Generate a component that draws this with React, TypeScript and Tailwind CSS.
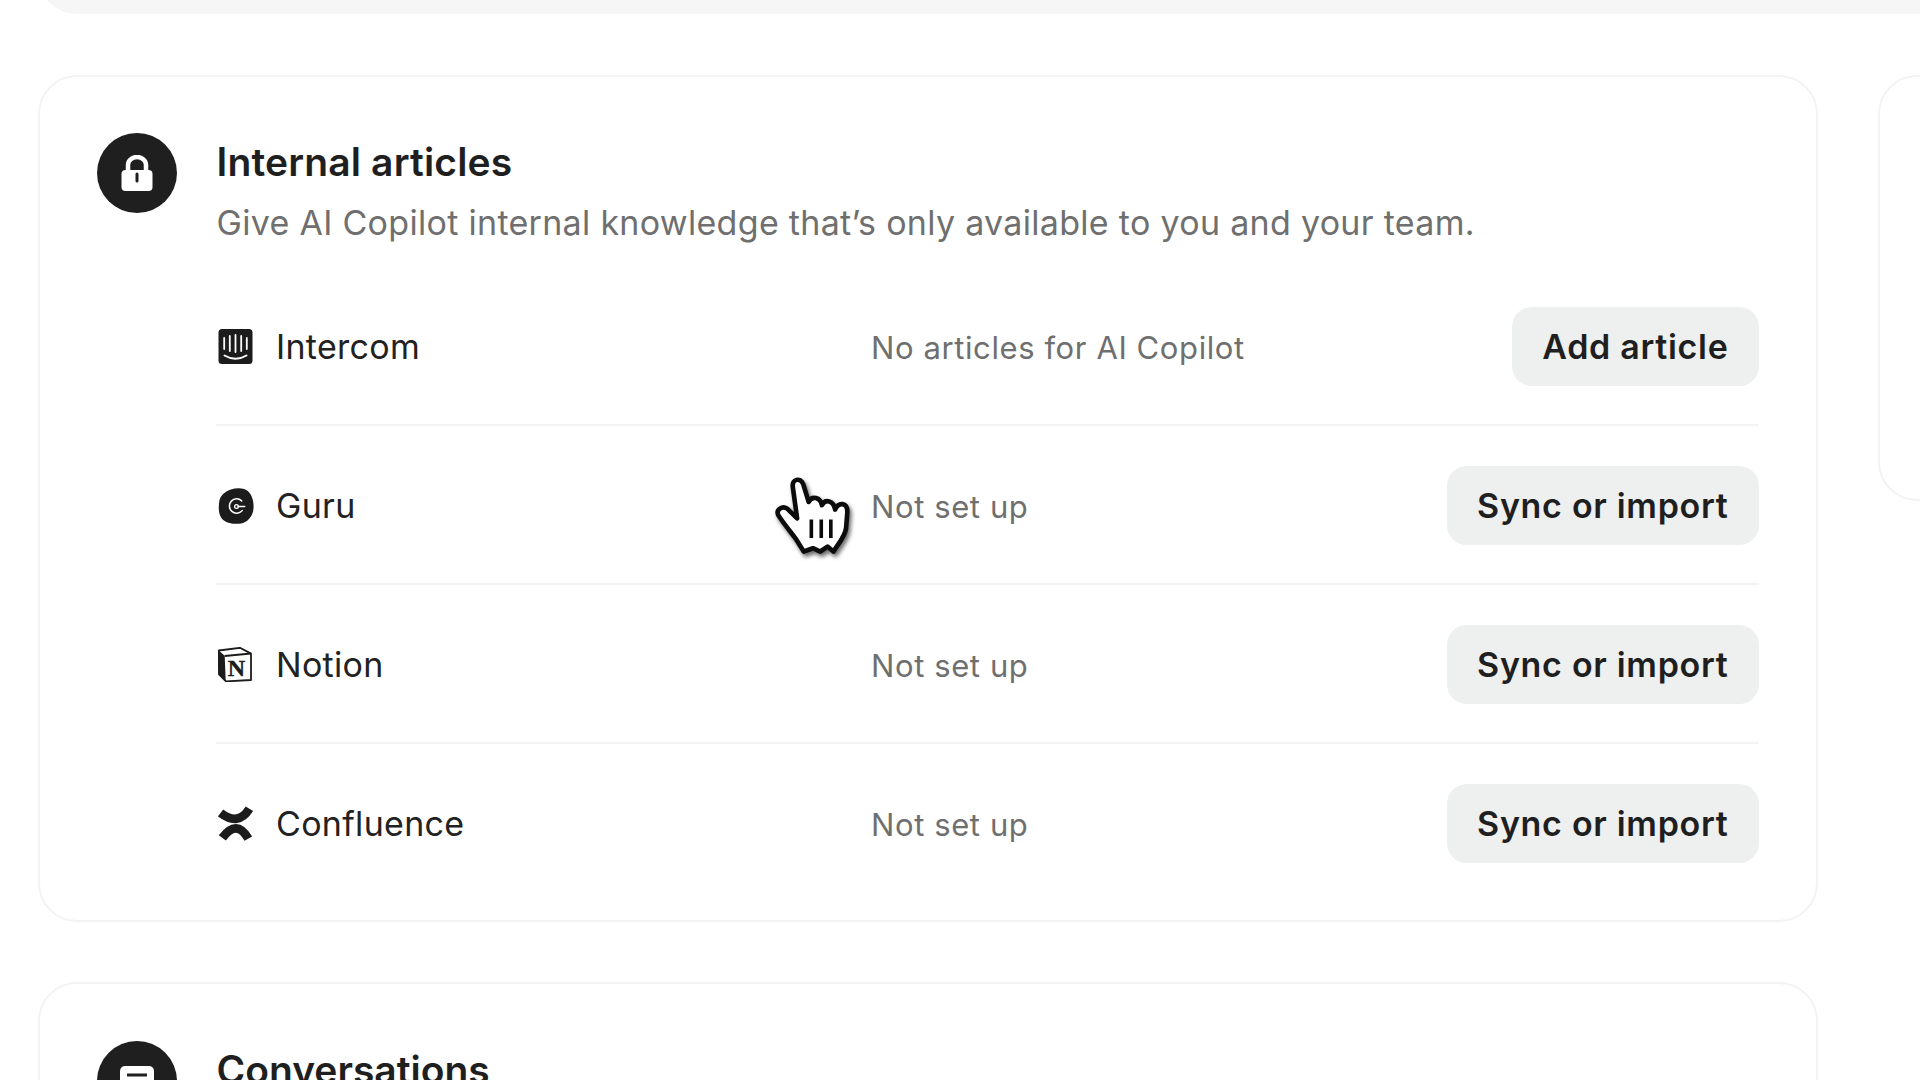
const FONT = "font-['Inter',sans-serif]";

function IntercomIcon() {
  return (
    <svg width="35" height="35" viewBox="0 0 34 35" className="shrink-0">
      <rect width="34" height="35" rx="3.5" fill="#1c1c1c" />
      <g stroke="#fff" strokeWidth="1.8" strokeLinecap="round">
        <path d="M5.7 9v11M11.3 7v15M17 6v17M22.7 7v15M28.3 9v11" />
        <path d="M6 26.5Q17 33 28 26.5" fill="none" strokeWidth="2" />
      </g>
    </svg>
  );
}

function GuruIcon() {
  return (
    <svg width="36" height="36" viewBox="0 0 34 35" className="mr-[-1px] shrink-0">
      <path d="M0.5 15C1 8 5 4 12 1.5 18-.5 25-.5 29 3.5 33 7.5 34.5 14 34 20 33.5 27 29 33 22 34.5 14 35.5 7 34.5 3 29.5 0 25 0 20 .5 15z" fill="#1c1c1c" />
      <path d="M22.5 12.5A7 7 0 1 0 23 22" fill="none" stroke="#fff" strokeWidth="1.5" strokeLinecap="round" />
      <circle cx="17.5" cy="18" r="1.8" fill="none" stroke="#fff" strokeWidth="1.3" />
      <path d="M19 18h6.5" stroke="#fff" strokeWidth="1.5" strokeLinecap="round" />
    </svg>
  );
}

function NotionIcon() {
  return (
    <svg width="34" height="35" viewBox="0 0 34 35" className="mr-[1px] shrink-0">
      <path d="M0.8 3.5 22 0.8l11 5.8V33l-25 1.4-7-7z" fill="#fff" stroke="#1c1c1c" strokeWidth="1.8" strokeLinejoin="round" />
      <path d="M0.5 3.3 6.7 8.7l1 25.6L1 27.7z" fill="#1c1c1c" />
      <path d="M6.7 9 33 6.6" stroke="#1c1c1c" strokeWidth="2" />
      <text x="18.5" y="28.5" textAnchor="middle" fontFamily="'Liberation Serif',serif" fontWeight="700" fontSize="24" stroke="#1c1c1c" strokeWidth="0.4" fill="#1c1c1c">N</text>
    </svg>
  );
}

function ConfluenceIcon() {
  return (
    <svg width="36" height="36" viewBox="0 0 34 35" className="mr-[-1px] shrink-0">
      <path d="M2 6.7Q19.4 19.9 30 2.7" fill="none" stroke="#1c1c1c" strokeWidth="8.5" />
      <path d="M3.7 31Q17.6 12 29 31.7" fill="none" stroke="#1c1c1c" strokeWidth="8.5" />
    </svg>
  );
}

function LockBadge() {
  return (
    <div className="flex h-[80px] w-[80px] shrink-0 items-center justify-center rounded-full bg-[#1f1f1f]">
      <svg width="32" height="36" viewBox="0 0 32 36">
        <path d="M7 17V10a9 8 0 0 1 18 0v7" fill="none" stroke="#fff" strokeWidth="4.5" />
        <rect x="0.5" y="15" width="31" height="21" rx="4" fill="#fff" />
        <path d="M16 19v7" stroke="#1f1f1f" strokeWidth="3" strokeLinecap="round" />
      </svg>
    </div>
  );
}

function ChatBadge() {
  return (
    <div className="flex h-[80px] w-[80px] shrink-0 items-center justify-center rounded-full bg-[#1f1f1f]">
      <svg width="34" height="30" viewBox="0 0 34 30">
        <rect width="34" height="30" rx="5" fill="#fff" />
        <path d="M7 9h20" stroke="#1f1f1f" strokeWidth="3" />
      </svg>
    </div>
  );
}

function HandCursor() {
  return (
    <svg
      width="76"
      height="82"
      viewBox="100 78 230 245"
      className="absolute left-[774px] top-[476px] drop-shadow-[2px_3px_2px_rgba(0,0,0,0.6)]"
    >
      <path
        d="M190 305 165 265C150 245 125 215 113 195 105 178 125 165 140 175L170 205 157 110C153 85 180 80 188 100L205 155C215 135 240 140 245 165 255 145 280 150 285 178 295 155 322 155 322 185L318 235C315 260 295 280 280 305L262 290 240 305 218 295Z"
        fill="#fff"
        stroke="#0c0c0c"
        strokeWidth="14"
        strokeLinejoin="round"
      />
      <path d="M213 208v56M243 208v56M272 208v56" stroke="#0c0c0c" strokeWidth="11" />
    </svg>
  );
}

type Source = { name: string; status: string; action: string; icon: React.ReactNode };

const SOURCES: Source[] = [
  { name: "Intercom", status: "No articles for AI Copilot", action: "Add article", icon: <IntercomIcon /> },
  { name: "Guru", status: "Not set up", action: "Sync or import", icon: <GuruIcon /> },
  { name: "Notion", status: "Not set up", action: "Sync or import", icon: <NotionIcon /> },
  { name: "Confluence", status: "Not set up", action: "Sync or import", icon: <ConfluenceIcon /> },
];

function SourceRow({ source }: { source: Source }) {
  return (
    <div className="flex items-center border-b-2 border-[#f3f3f3] pb-[38px] pt-[40px] last:border-b-0 last:pb-0">
      <div className="flex w-[655px] shrink-0 items-center gap-[23px] pl-[2px]">
        {source.icon}
        <span className="text-[34px] leading-[49px] tracking-[0.3px] text-[#222222]">{source.name}</span>
      </div>
      <span className="pt-[2px] text-[31px] leading-[49px] tracking-[0.6px] text-[#6f6f6f]">{source.status}</span>
      <button
        type="button"
        className="ml-auto h-[79px] rounded-[20px] bg-[#eeefef] px-[30.5px] text-[34px] font-semibold tracking-[0.7px] text-[#1f1f1f]"
      >
        {source.action}
      </button>
    </div>
  );
}

export default function App() {
  return (
    <div className={`relative h-screen w-full overflow-hidden bg-white ${FONT}`}>
      <div className="ml-[38px] h-[14px] overflow-hidden">
        <div className="mt-[-66px] h-[80px] rounded-bl-[39px] bg-[#f6f6f6]" />
      </div>

      <div className="mt-[61px] flex items-start gap-[60px] pl-[38px]">
        <div className="flex w-[1780px] shrink-0 flex-col gap-[60px]">
          <section className="h-[847px] rounded-[39px] border-2 border-[#f3f3f3] px-[57px] pt-[56px]">
            <div className="flex gap-[39.5px]">
              <LockBadge />
              <div>
                <h2 className="text-[39px] font-semibold leading-[57px] tracking-[0.15px] text-[#1f1f1f]">Internal articles</h2>
                <p className="mt-[3px] text-[34px] leading-[59px] tracking-[0.3px] text-[#6f6f6f]">
                  Give AI Copilot internal knowledge that’s only available to you and your team.
                </p>
              </div>
            </div>
            <div className="ml-[119px] mt-[15px]">
              {SOURCES.map((s) => (
                <SourceRow key={s.name} source={s} />
              ))}
            </div>
          </section>

          <section className="h-[400px] rounded-[39px] border-2 border-[#f3f3f3] px-[57px] pt-[57px]">
            <div className="flex gap-[39.5px]">
              <ChatBadge />
              <h2 className="text-[39px] font-semibold leading-[57px] text-[#1f1f1f]">Conversations</h2>
            </div>
          </section>
        </div>

        <div className="h-[426px] w-[200px] shrink-0 rounded-[39px] border-2 border-[#f3f3f3]" />
      </div>

      <HandCursor />
    </div>
  );
}
